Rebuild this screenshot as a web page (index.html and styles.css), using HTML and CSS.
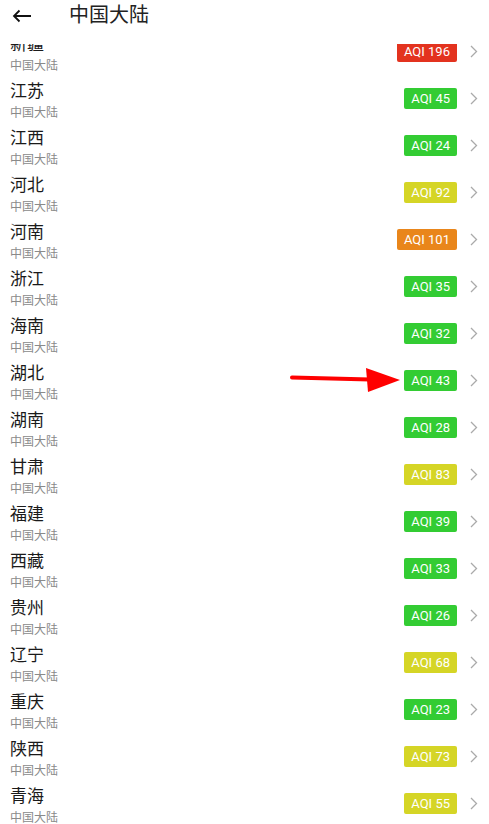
FILE: index.html
```html
<!DOCTYPE html>
<html lang="zh-CN">
<head>
    <meta charset="UTF-8">
    <meta name="viewport" content="width=device-width, initial-scale=1.0">
    <title>中国大陆</title>
    <link rel="stylesheet" href="styles.css">
</head>
<body>
    <header class="topbar">
        <svg class="back" width="20" height="14" viewBox="0 0 20 14">
            <path d="M2 7H19M7.5 1.5L2 7l5.5 5.5" fill="none" stroke="#111" stroke-width="1.8"/>
        </svg>
        <h1>中国大陆</h1>
    </header>

    <ul class="list">
        <li class="row"><div class="name"><span class="title">新疆</span><span class="sub">中国大陆</span></div><span class="aqi red">AQI 196</span><svg class="chev" width="8" height="13" viewBox="0 0 8 13"><path d="M1 1l5.5 5.5L1 12" fill="none" stroke="#aaa" stroke-width="1.3"/></svg></li>
        <li class="row"><div class="name"><span class="title">江苏</span><span class="sub">中国大陆</span></div><span class="aqi green">AQI 45</span><svg class="chev" width="8" height="13" viewBox="0 0 8 13"><path d="M1 1l5.5 5.5L1 12" fill="none" stroke="#aaa" stroke-width="1.3"/></svg></li>
        <li class="row"><div class="name"><span class="title">江西</span><span class="sub">中国大陆</span></div><span class="aqi green">AQI 24</span><svg class="chev" width="8" height="13" viewBox="0 0 8 13"><path d="M1 1l5.5 5.5L1 12" fill="none" stroke="#aaa" stroke-width="1.3"/></svg></li>
        <li class="row"><div class="name"><span class="title">河北</span><span class="sub">中国大陆</span></div><span class="aqi yellow">AQI 92</span><svg class="chev" width="8" height="13" viewBox="0 0 8 13"><path d="M1 1l5.5 5.5L1 12" fill="none" stroke="#aaa" stroke-width="1.3"/></svg></li>
        <li class="row"><div class="name"><span class="title">河南</span><span class="sub">中国大陆</span></div><span class="aqi orange">AQI 101</span><svg class="chev" width="8" height="13" viewBox="0 0 8 13"><path d="M1 1l5.5 5.5L1 12" fill="none" stroke="#aaa" stroke-width="1.3"/></svg></li>
        <li class="row"><div class="name"><span class="title">浙江</span><span class="sub">中国大陆</span></div><span class="aqi green">AQI 35</span><svg class="chev" width="8" height="13" viewBox="0 0 8 13"><path d="M1 1l5.5 5.5L1 12" fill="none" stroke="#aaa" stroke-width="1.3"/></svg></li>
        <li class="row"><div class="name"><span class="title">海南</span><span class="sub">中国大陆</span></div><span class="aqi green">AQI 32</span><svg class="chev" width="8" height="13" viewBox="0 0 8 13"><path d="M1 1l5.5 5.5L1 12" fill="none" stroke="#aaa" stroke-width="1.3"/></svg></li>
        <li class="row"><div class="name"><span class="title">湖北</span><span class="sub">中国大陆</span></div><span class="aqi green">AQI 43</span><svg class="chev" width="8" height="13" viewBox="0 0 8 13"><path d="M1 1l5.5 5.5L1 12" fill="none" stroke="#aaa" stroke-width="1.3"/></svg>
            <svg class="pointer" width="116" height="30" viewBox="0 0 116 30">
                <path d="M2 12.5L80 14.5" stroke="#f00" stroke-width="4" stroke-linecap="round"/>
                <path d="M76 3L110 15L78 27Z" fill="#f00"/>
            </svg>
        </li>
        <li class="row"><div class="name"><span class="title">湖南</span><span class="sub">中国大陆</span></div><span class="aqi green">AQI 28</span><svg class="chev" width="8" height="13" viewBox="0 0 8 13"><path d="M1 1l5.5 5.5L1 12" fill="none" stroke="#aaa" stroke-width="1.3"/></svg></li>
        <li class="row"><div class="name"><span class="title">甘肃</span><span class="sub">中国大陆</span></div><span class="aqi yellow">AQI 83</span><svg class="chev" width="8" height="13" viewBox="0 0 8 13"><path d="M1 1l5.5 5.5L1 12" fill="none" stroke="#aaa" stroke-width="1.3"/></svg></li>
        <li class="row"><div class="name"><span class="title">福建</span><span class="sub">中国大陆</span></div><span class="aqi green">AQI 39</span><svg class="chev" width="8" height="13" viewBox="0 0 8 13"><path d="M1 1l5.5 5.5L1 12" fill="none" stroke="#aaa" stroke-width="1.3"/></svg></li>
        <li class="row"><div class="name"><span class="title">西藏</span><span class="sub">中国大陆</span></div><span class="aqi green">AQI 33</span><svg class="chev" width="8" height="13" viewBox="0 0 8 13"><path d="M1 1l5.5 5.5L1 12" fill="none" stroke="#aaa" stroke-width="1.3"/></svg></li>
        <li class="row"><div class="name"><span class="title">贵州</span><span class="sub">中国大陆</span></div><span class="aqi green">AQI 26</span><svg class="chev" width="8" height="13" viewBox="0 0 8 13"><path d="M1 1l5.5 5.5L1 12" fill="none" stroke="#aaa" stroke-width="1.3"/></svg></li>
        <li class="row"><div class="name"><span class="title">辽宁</span><span class="sub">中国大陆</span></div><span class="aqi yellow">AQI 68</span><svg class="chev" width="8" height="13" viewBox="0 0 8 13"><path d="M1 1l5.5 5.5L1 12" fill="none" stroke="#aaa" stroke-width="1.3"/></svg></li>
        <li class="row"><div class="name"><span class="title">重庆</span><span class="sub">中国大陆</span></div><span class="aqi green">AQI 23</span><svg class="chev" width="8" height="13" viewBox="0 0 8 13"><path d="M1 1l5.5 5.5L1 12" fill="none" stroke="#aaa" stroke-width="1.3"/></svg></li>
        <li class="row"><div class="name"><span class="title">陕西</span><span class="sub">中国大陆</span></div><span class="aqi yellow">AQI 73</span><svg class="chev" width="8" height="13" viewBox="0 0 8 13"><path d="M1 1l5.5 5.5L1 12" fill="none" stroke="#aaa" stroke-width="1.3"/></svg></li>
        <li class="row"><div class="name"><span class="title">青海</span><span class="sub">中国大陆</span></div><span class="aqi yellow">AQI 55</span><svg class="chev" width="8" height="13" viewBox="0 0 8 13"><path d="M1 1l5.5 5.5L1 12" fill="none" stroke="#aaa" stroke-width="1.3"/></svg></li>
    </ul>
</body>
</html>
```

FILE: styles.css
```css
body {
    font-family: Roboto, "Noto Sans CJK SC", sans-serif;
    margin: 0;
    padding: 0;
    background-color: #fff;
    color: #222;
    height: 824px;
    overflow: hidden;
}
.topbar {
    position: absolute;
    top: 0;
    left: 0;
    right: 0;
    height: 44px;
    background-color: #fff;
    z-index: 2;
    display: flex;
    align-items: flex-start;
}
.back {
    margin: 9px 0 0 12px;
}
.topbar h1 {
    margin: 0 0 0 37px;
    padding-top: 1px;
    font-size: 20px;
    line-height: 28px;
    font-weight: normal;
    color: #222;
}
.list {
    list-style: none;
    margin: 0;
    padding: 28px 0 0 0;
}
.row {
    position: relative;
    height: 47px;
    display: flex;
    align-items: center;
    padding: 0 11px 0 10px;
    box-sizing: border-box;
}
.name {
    flex: 1;
    display: flex;
    flex-direction: column;
    padding-top: 4px;
}
.title {
    font-size: 17px;
    line-height: 22px;
    color: #1a1a1a;
}
.sub {
    margin-top: 3px;
    font-size: 12px;
    line-height: 16px;
    color: #8a8a8a;
}
.aqi {
    height: 21px;
    line-height: 21px;
    padding: 0 7px;
    border-radius: 2px;
    font-size: 13px;
    color: #fff;
}
.green {
    background-color: #33cc33;
}
.yellow {
    background-color: #d5d526;
}
.orange {
    background-color: #e9861b;
}
.red {
    background-color: #e3331f;
}
.chev {
    margin-left: 13px;
}
.pointer {
    position: absolute;
    left: 290px;
    top: 8px;
}
```
